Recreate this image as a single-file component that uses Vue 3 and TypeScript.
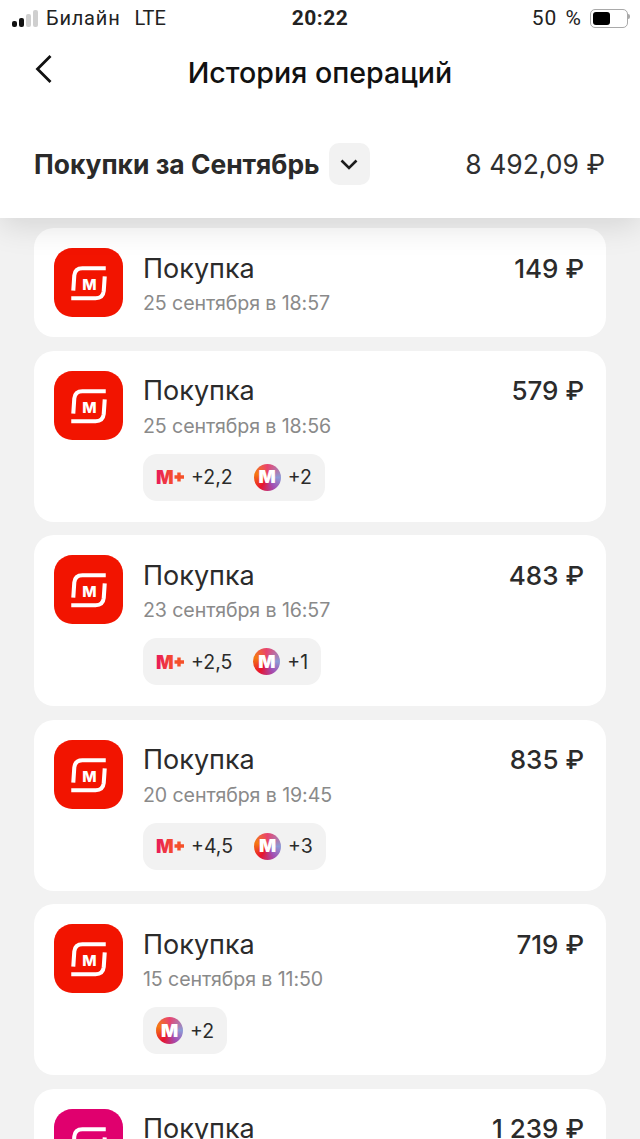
<template>
  <div class="screen">
    <header class="top">
      <div class="status-bar">
        <div class="status-left">
          <span class="signal">
            <i class="on s1"></i><i class="on s2"></i><i class="s3"></i><i class="s4"></i>
          </span>
          <span class="carrier">Билайн</span>
          <span class="net">LTE</span>
        </div>
        <span class="clock">20:22</span>
        <div class="status-right">
          <span class="charge">50 %</span>
          <span class="battery"><i></i></span>
        </div>
      </div>

      <div class="nav">
        <svg class="back" width="18" height="30" viewBox="0 0 18 30">
          <path d="M15.5 2 L2.5 15 L15.5 28" fill="none" stroke="#111" stroke-width="2.8" />
        </svg>
        <span class="nav-title">История операций</span>
      </div>

      <div class="summary">
        <span class="summary-title">Покупки за Сентябрь</span>
        <span class="month-btn">
          <svg width="18" height="11" viewBox="0 0 18 11">
            <path d="M1.5 1.5 L9 9 L16.5 1.5" fill="none" stroke="#1d1d1d" stroke-width="2.6" />
          </svg>
        </span>
        <span class="summary-total">8 492,09 ₽</span>
      </div>
    </header>

    <main class="list">
      <section v-for="op in operations" :key="op.date" class="card">
        <svg class="logo" width="69" height="69" viewBox="0 0 68 68">
          <rect width="68" height="68" rx="18" :fill="op.color" />
          <path
            d="M51 20 H28 C23 20 20.500 22.500 20 27 L19 42"
            fill="none"
            stroke="#fff"
            stroke-width="4"
          />
          <path
            d="M17 49.500 H41 C46 49.500 48.500 47 49 42.500 L50 28"
            fill="none"
            stroke="#fff"
            stroke-width="4"
          />
          <text x="35" y="41.500" text-anchor="middle" class="logo-m">М</text>
        </svg>
        <div class="body">
          <div class="row">
            <span class="name">Покупка</span>
            <span class="amount">{{ op.amount }}</span>
          </div>
          <div class="date">{{ op.date }}</div>
          <div v-if="op.bonus || op.coins" class="pill">
            <template v-if="op.bonus">
              <svg class="mplus" width="30" height="20" viewBox="0 0 30 20">
                <defs>
                  <linearGradient id="mp" x1="0" y1="0" x2="1" y2="0">
                    <stop offset="0" stop-color="#e8175d" />
                    <stop offset="1" stop-color="#f5502a" />
                  </linearGradient>
                </defs>
                <text x="0" y="16.500" class="mplus-m" fill="url(#mp)">М</text>
                <path d="M23 5.500 V14.500 M18.500 10 H28" stroke="#f5502a" stroke-width="3.400" fill="none" />
              </svg>
              <span class="val bonus-val">{{ op.bonus }}</span>
            </template>
            <template v-if="op.coins">
              <span class="coin"><span>М</span></span>
              <span class="val">{{ op.coins }}</span>
            </template>
          </div>
        </div>
      </section>
    </main>
  </div>
</template>

<script setup lang="ts">
type Operation = {
  amount: string;
  date: string;
  color: string;
  bonus?: string;
  coins?: string;
};

const RED = "#f21400";
const PINK = "#e0006e";

const operations: Operation[] = [
  { amount: "149 ₽", date: "25 сентября в 18:57", color: RED },
  { amount: "579 ₽", date: "25 сентября в 18:56", color: RED, bonus: "+2,2", coins: "+2" },
  { amount: "483 ₽", date: "23 сентября в 16:57", color: RED, bonus: "+2,5", coins: "+1" },
  { amount: "835 ₽", date: "20 сентября в 19:45", color: RED, bonus: "+4,5", coins: "+3" },
  { amount: "719 ₽", date: "15 сентября в 11:50", color: RED, coins: "+2" },
  { amount: "1 239 ₽", date: "12 сентября в 10:12", color: PINK },
];
</script>

<style>
html,
body {
  margin: 0;
  background: #f2f2f2;
}
</style>

<style scoped>
.screen {
  height: 1139px;
  overflow: hidden;
  background: #f2f2f2;
  font-family: Inter, "Noto Sans", sans-serif;
  color: #2b2b2b;
}

.top {
  position: relative;
  z-index: 2;
  height: 218px;
  background: #fff;
  box-shadow: 0 8px 30px rgba(0, 0, 0, 0.12);
}

.status-bar {
  height: 36px;
  display: grid;
  grid-template-columns: 1fr auto 1fr;
  align-items: center;
  padding: 0 12px;
  font-family: Roboto, "Noto Sans", sans-serif;
  font-size: 20px;
  color: #222;
}

.status-left {
  display: flex;
  align-items: center;
}

.signal {
  display: flex;
  align-items: flex-end;
  gap: 2px;
  height: 17px;
  margin-right: 8px;
}

.signal i {
  width: 5px;
  border-radius: 2px;
  background: #cfcfcf;
}

.signal .on {
  background: #111;
}

.s1 {
  height: 6px;
}
.s2 {
  height: 9px;
}
.s3 {
  height: 13px;
}
.s4 {
  height: 17px;
}

.carrier {
  letter-spacing: 0.8px;
}

.net {
  margin-left: 14px;
}

.clock {
  font-weight: 700;
  font-size: 21px;
  letter-spacing: 0.5px;
}

.status-right {
  display: flex;
  align-items: center;
  justify-content: flex-end;
  gap: 8px;
}

.charge {
  font-size: 21px;
  letter-spacing: 1px;
  word-spacing: 2px;
}

.battery {
  position: relative;
  width: 32px;
  height: 13px;
  padding: 2px;
  border: 1px solid #a9a9a9;
  border-radius: 5px;
}

.battery::after {
  content: "";
  position: absolute;
  right: -3px;
  top: 4px;
  width: 2px;
  height: 5px;
  background: #a9a9a9;
  border-radius: 0 2px 2px 0;
}

.battery i {
  display: block;
  width: 52%;
  height: 100%;
  background: #000;
  border-radius: 3px;
}

.nav {
  position: relative;
  height: 72px;
  display: flex;
  align-items: center;
  justify-content: center;
}

.back {
  position: absolute;
  left: 35px;
  top: 18px;
}

.nav-title {
  font-size: 28.600px;
  font-weight: 500;
  color: #111;
}

.summary {
  display: flex;
  align-items: center;
  padding: 35px 35px 0 34px;
}

.summary-title {
  font-size: 26.400px;
  font-weight: 700;
  color: #2a2a2a;
}

.month-btn {
  width: 41px;
  height: 42px;
  margin-left: 9px;
  display: flex;
  align-items: center;
  justify-content: center;
  background: #f2f2f2;
  border-radius: 10px;
}

.summary-total {
  margin-left: auto;
  font-size: 26.500px;
  color: #2f2f2f;
}

.list {
  display: flex;
  flex-direction: column;
  gap: 13.500px;
  padding: 10px 34px 0;
}

.card {
  display: flex;
  gap: 20px;
  padding: 20px 22px 20px 20px;
  background: #fff;
  border-radius: 20px;
}

.logo {
  flex: none;
}

.logo-m {
  fill: #fff;
  font-size: 15px;
  font-weight: 800;
}

.body {
  flex: 1;
  min-width: 0;
}

.row {
  display: flex;
  justify-content: space-between;
  align-items: center;
  height: 36px;
  margin-top: 2px;
}

.name {
  font-size: 27px;
  color: #2b2b2b;
}

.amount {
  font-size: 26px;
  font-weight: 500;
  color: #2b2b2b;
}

.date {
  font-size: 19.600px;
  line-height: 26px;
  margin-top: 4px;
  color: #8a8a8a;
  letter-spacing: -0.1px;
}

.pill {
  display: inline-flex;
  align-items: center;
  height: 47px;
  margin-top: 15px;
  margin-bottom: 1px;
  padding: 0 13px;
  background: #f2f2f2;
  border-radius: 14px;
}

.mplus {
  margin-right: 5px;
}

.mplus-m {
  font-size: 18.500px;
  font-weight: 900;
}

.val {
  font-size: 19.500px;
  color: #2b2b2b;
}

.bonus-val {
  margin-right: 21px;
}

.coin {
  width: 27px;
  height: 27px;
  margin-right: 7px;
  border-radius: 50%;
  display: flex;
  align-items: center;
  justify-content: center;
  background: conic-gradient(#e8436f 0deg, #8c9ad6 90deg, #a44bb0 150deg, #e8142e 215deg, #f57a12 290deg, #e8436f 360deg);
}

.coin span {
  color: #fff;
  font-size: 18px;
  font-weight: 900;
  line-height: 1;
}
</style>
